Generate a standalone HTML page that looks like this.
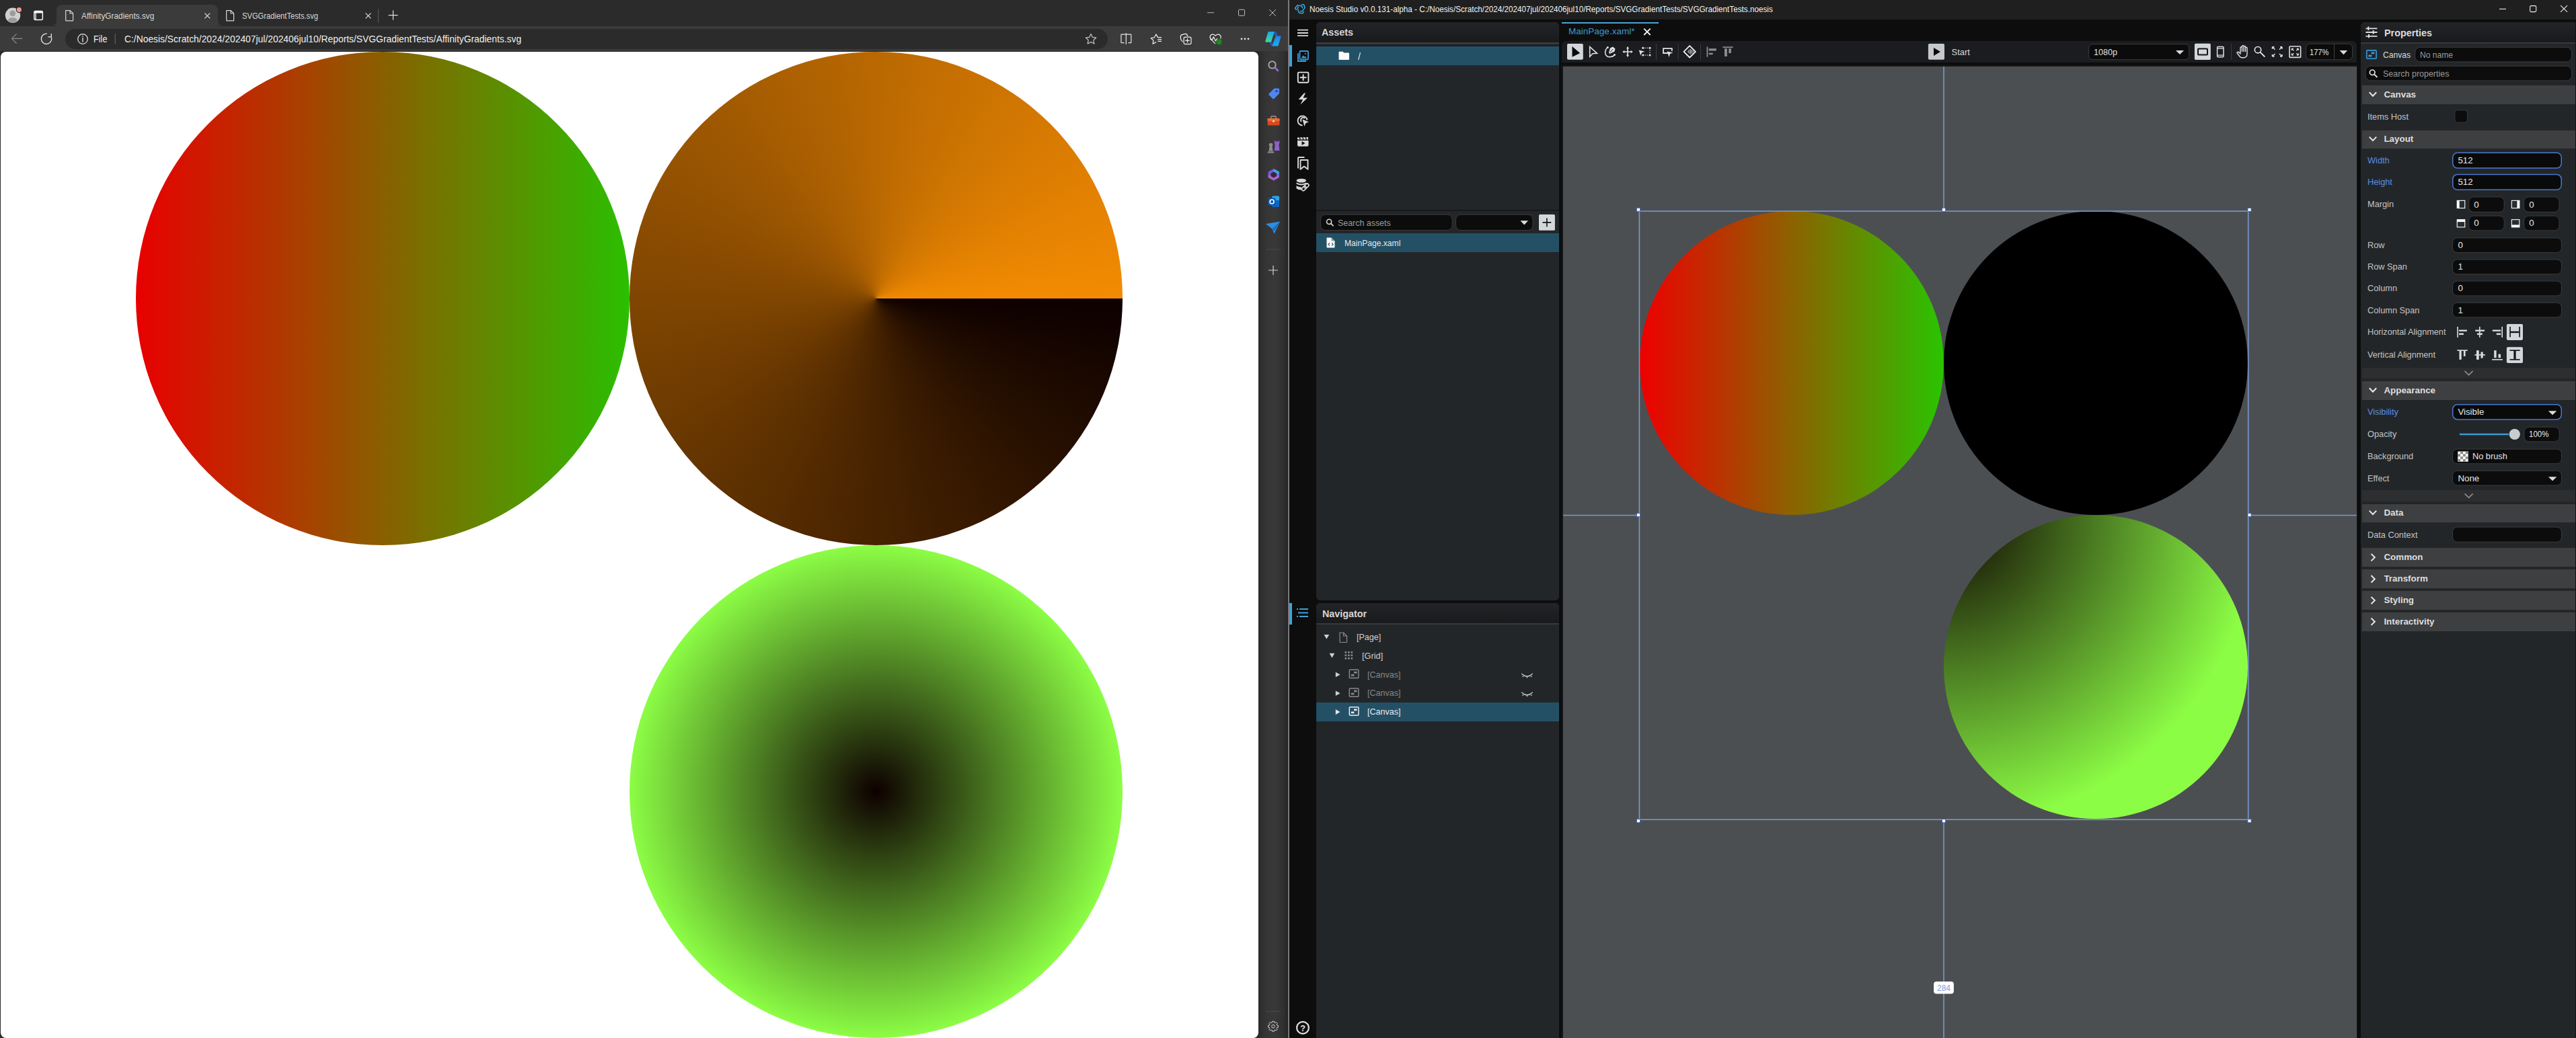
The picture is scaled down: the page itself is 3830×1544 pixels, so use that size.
<!DOCTYPE html>
<html><head><meta charset="utf-8">
<style>
*{box-sizing:border-box}
html,body{margin:0;padding:0}
body{width:3830px;height:1544px;position:relative;overflow:hidden;background:#0d0d0d;font-family:"Liberation Sans",sans-serif}
.a{position:absolute}
.t{position:absolute;white-space:nowrap;line-height:1}
svg{position:absolute;overflow:visible}
</style></head><body>
<!-- ============ EDGE BROWSER ============ -->
<div class="a" style="left:0;top:0;width:1915px;height:1544px;background:#2b2b2b"></div>
<div class="a" style="left:0;top:38.5px;width:1915px;height:37.5px;background:#3b3b3b"></div>
<div class="a" style="left:0;top:76px;width:1871px;height:1px;background:#272727"></div>
<!-- active tab -->
<div class="a" style="left:84px;top:7px;width:240px;height:32px;background:#3b3b3b;border-radius:8px 8px 0 0"></div>
<svg style="left:76px;top:30px" width="8" height="8"><path d="M0 8 Q8 8 8 0 V8Z" fill="#3b3b3b"/></svg>
<svg style="left:324px;top:30px" width="8" height="8"><path d="M8 8 Q0 8 0 0 V8Z" fill="#3b3b3b"/></svg>
<!-- avatar -->
<svg style="left:0;top:0" width="40" height="40">
  <circle cx="19" cy="22.8" r="11.2" fill="#d0d0d0"/>
  <circle cx="18.8" cy="19.8" r="4.4" fill="#9c9c9c"/>
  <path d="M11.5 30.5 Q13 26.2 18.8 26.2 Q24.6 26.2 26.2 30.5 Q23 33.6 18.9 33.6 Q14.8 33.6 11.5 30.5Z" fill="#9c9c9c"/>
  <circle cx="28.4" cy="14.6" r="4.6" fill="#2b2b2b"/>
  <circle cx="28.4" cy="14.6" r="3.5" fill="#f09a9a"/>
</svg>
<!-- vertical tabs icon -->
<svg style="left:0;top:0" width="80" height="40">
  <rect x="50.8" y="16.5" width="12.6" height="13" rx="2" fill="none" stroke="#fff" stroke-width="1.4"/>
  <rect x="50.8" y="16" width="12.6" height="3.6" rx="1.5" fill="#fff"/>
  <rect x="52.4" y="19" width="1.3" height="10.5" fill="#fff"/>
</svg>
<!-- file icons -->
<svg style="left:0;top:0" width="360" height="40">
  <path d="M97.7 15.6 H104.3 L108.6 19.9 V30.2 Q108.6 30.8 108 30.8 H98.3 Q97.7 30.8 97.7 30.2Z M104.1 15.6 V20 H108.6" fill="none" stroke="#d8d8d8" stroke-width="1.2" stroke-linejoin="round"/>
  <path d="M336.7 15.6 H343.3 L347.6 19.9 V30.2 Q347.6 30.8 347 30.8 H337.3 Q336.7 30.8 336.7 30.2Z M343.1 15.6 V20 H347.6" fill="none" stroke="#d8d8d8" stroke-width="1.2" stroke-linejoin="round"/>
  <path d="M304.4 19.6 L312.2 27.4 M312.2 19.6 L304.4 27.4" stroke="#e0e0e0" stroke-width="1.2"/>
  <path d="M543.6 19.6 L551.4 27.4 M551.4 19.6 L543.6 27.4" stroke="#e0e0e0" stroke-width="1.2"/>
</svg>
<svg style="left:0;top:0" width="600" height="40">
  <path d="M562.5 13.2 V33.7" stroke="#5a5a5a" stroke-width="1"/>
  <path d="M577.6 22.6 H591.5 M584.5 15.6 V29.7" stroke="#e0e0e0" stroke-width="1.2"/>
</svg>
<div class="t" style="left:121px;top:16.5px;font-size:13.5px;color:#d8d8d8;transform:scaleX(0.877);transform-origin:0 0">AffinityGradients.svg</div>
<div class="t" style="left:360px;top:16.5px;font-size:13.5px;color:#d8d8d8;transform:scaleX(0.8275);transform-origin:0 0">SVGGradientTests.svg</div>
<!-- window buttons -->
<svg style="left:1780px;top:0" width="135" height="38">
  <path d="M15 18.8 H25" stroke="#bdbdbd" stroke-width="1"/>
  <rect x="61.5" y="14.3" width="9" height="9" rx="1" fill="none" stroke="#bdbdbd" stroke-width="1"/>
  <path d="M107 14 L117 24 M117 14 L107 24" stroke="#bdbdbd" stroke-width="1"/>
</svg>
<!-- back / refresh -->
<svg style="left:0;top:38px" width="100" height="38">
  <path d="M17.5 19.4 H33 M17.5 19.4 L24.6 12.3 M17.5 19.4 L24.6 26.5" fill="none" stroke="#8c8c8c" stroke-width="1.2"/>
  <path d="M69.8 12.1 A7.7 7.7 0 1 0 76 16.5" fill="none" stroke="#e6e6e6" stroke-width="1.3"/>
  <path d="M71.3 16.9 H76.3 V12" fill="none" stroke="#e6e6e6" stroke-width="1.3"/>
</svg>
<!-- url pill -->
<div class="a" style="left:97px;top:43px;width:1550px;height:30px;background:#2b2b2b;border-radius:15px"></div>
<svg style="left:0;top:38px" width="200" height="38">
  <circle cx="123" cy="20" r="7.3" fill="none" stroke="#e6e6e6" stroke-width="1.2"/>
  <path d="M123 18 V24.5" stroke="#e6e6e6" stroke-width="1.4"/>
  <circle cx="123" cy="15.8" r="0.9" fill="#e6e6e6"/>
  <path d="M171.2 12.2 V27.8" stroke="#6a6a6a" stroke-width="1"/>
</svg>
<div class="t" style="left:139.4px;top:51px;font-size:14.5px;color:#f0f0f0;transform:scaleX(0.877);transform-origin:0 0">File</div>
<div class="t" style="left:184.5px;top:51px;font-size:14.5px;color:#f0f0f0;transform:scaleX(0.955);transform-origin:0 0">C:/Noesis/Scratch/2024/202407jul/202406jul10/Reports/SVGGradientTests/AffinityGradients.svg</div>
<!-- toolbar icons right -->
<svg style="left:1600px;top:38px" width="315" height="38">
  <path d="M22 12.4 L24.4 17.4 L29.8 18 L25.8 21.7 L26.9 27.1 L22 24.4 L17.1 27.1 L18.2 21.7 L14.2 18 L19.6 17.4Z" fill="none" stroke="#cfcfcf" stroke-width="1.1" stroke-linejoin="round"/>
  <path d="M81.5 13.2 H67.5 Q66.9 13.2 66.9 13.8 V25 Q66.9 25.6 67.5 25.6 H71.5 M77.5 13.2 H81.2 Q81.8 13.2 81.8 13.8 V25 Q81.8 25.6 81.2 25.6 H77.5 M74.3 11.2 V28" fill="none" stroke="#e6e6e6" stroke-width="1.2"/>
  <path d="M121.5 17.6 L118.9 13 L116.3 17.8 L111.2 18.5 L114.9 22.2 L114 27.3 L118.6 24.9" fill="none" stroke="#f0f0f0" stroke-width="1.2" stroke-linejoin="round" stroke-linecap="round"/>
  <path d="M121.3 17.6 H127 M121.3 20.6 H127 M121.3 23.4 H127" stroke="#f0f0f0" stroke-width="1.2"/>
  <path d="M158.6 23.7 Q155.8 22.5 155.4 19 L155.3 16.5 Q155.4 14 158 13.3 L161.8 12.4 Q164.8 12 165.7 15.4" fill="none" stroke="#f0f0f0" stroke-width="1.2" stroke-linecap="round"/>
  <rect x="160.1" y="17.1" width="10.9" height="10.6" rx="2.2" fill="#3b3b3b" stroke="#f0f0f0" stroke-width="1.2"/>
  <path d="M165.5 19.2 V25.6 M162.3 22.4 H168.7" stroke="#f0f0f0" stroke-width="1.2"/>
  <path d="M206.6 26.7 L201 21 Q198.4 18.4 199.3 15.8 Q200.4 13 203.4 13.2 Q205.6 13.5 207.1 15.1 Q208.6 13.5 210.8 13.2 Q213.8 13 214.9 15.8 Q215.6 17.6 214.8 19" fill="none" stroke="#f0f0f0" stroke-width="1.2" stroke-linecap="round"/>
  <path d="M199.2 20.6 H202.5 L204.5 16.9 L207.3 22.9 L209.8 19.2" fill="none" stroke="#f0f0f0" stroke-width="1.2" stroke-linejoin="round"/>
  <circle cx="212.4" cy="24.4" r="4.1" fill="#1a8a1e"/>
  <circle cx="246" cy="19.8" r="1.4" fill="#e6e6e6"/><circle cx="251" cy="19.8" r="1.4" fill="#e6e6e6"/><circle cx="256" cy="19.8" r="1.4" fill="#e6e6e6"/>
</svg>
<!-- copilot logo -->
<svg style="left:1879px;top:44px" width="28" height="28" viewBox="0 0 28 28">
  <defs>
    <linearGradient id="cp1" x1="0" y1="0" x2="0" y2="1"><stop offset="0" stop-color="#20a8e8"/><stop offset="1" stop-color="#45d890"/></linearGradient>
    <linearGradient id="cp2" x1="0" y1="0" x2="0" y2="1"><stop offset="0" stop-color="#2a7ee8"/><stop offset="1" stop-color="#18b0f0"/></linearGradient>
  </defs>
  <path d="M14 3.3 L17.5 3.3 Q19 3.6 19.6 5.4 L21 9.6 L16.5 9.6Z" fill="#1a5cb8"/>
  <path d="M8.5 17.8 L11 17.8 L14.8 24.4 L12 24.4 Q10.6 24.2 10 22.8Z" fill="#2450d8"/>
  <path d="M7.6 3.1 H15.8 L11.2 17.8 Q10.9 18.7 9.8 18.7 H3.4 Q2 18.6 2.3 17.2 L6 4.6 Q6.4 3.1 7.6 3.1Z" fill="url(#cp1)"/>
  <path d="M18.9 9.4 H24.3 Q25.7 9.5 25.4 11 L21.8 23.3 Q21.5 24.5 20.3 24.5 H12.4 L17.4 10.5 Q17.8 9.4 18.9 9.4Z" fill="url(#cp2)"/>
</svg>
<!-- sidebar -->
<div class="a" style="left:1871px;top:76px;width:44px;height:1468px;background:linear-gradient(90deg,#1c1c1c 0,#2c2c2c 1.5px,#353535 12px,#383838 24px,#303030 38px,#242424 44px)"></div>
<svg style="left:1871px;top:76px" width="44" height="1468">
  <circle cx="20.5" cy="20.5" r="5.2" fill="none" stroke="#a0a0a0" stroke-width="2"/>
  <path d="M24.2 24.2 L29 29" stroke="#a070d0" stroke-width="2.6" stroke-linecap="round"/>
  <path d="M15.5 63.5 L23 56 Q23.6 55.6 24.3 55.6 H30 Q31 55.6 31 56.6 V62.3 Q31 63 30.5 63.5 L23 71 Q22.2 71.8 21.4 71 L15.5 65.1 Q14.7 64.3 15.5 63.5Z" fill="#4f86ee"/>
  <circle cx="27" cy="59.6" r="1.7" fill="#1f3f90"/>
  <rect x="13.6" y="100" width="17.8" height="10.5" rx="1.2" fill="#d9481c"/>
  <rect x="13.6" y="100" width="17.8" height="4.2" rx="1" fill="#f06a36"/>
  <path d="M18.8 100 V98 Q18.8 97 19.8 97 H25.2 Q26.2 97 26.2 98 V100" fill="none" stroke="#9a9a9a" stroke-width="1.4"/>
  <circle cx="22.5" cy="104.2" r="1.5" fill="#f4e0d8"/>
  <circle cx="18.5" cy="139.5" r="2.8" fill="#8c8c8c"/>
  <path d="M16.5 142 H20.5 L21.5 148.5 H15.5Z" fill="#8c8c8c"/>
  <path d="M13.6 152 Q13.6 148.5 16 148.5 H21 Q23.3 148.5 23.3 152Z" fill="#7a7a7a"/>
  <path d="M23.8 148 L24.8 139 L23.8 136.5 V133.6 H25.6 V135 H27 V133.6 H28.3 V135 H29.6 V133.6 H31.4 V136.5 L30.4 139 L31.4 148Z" fill="#8e62cc"/>
  <path d="M22.7 175 L30.8 179.4 V188 L22.7 192.4 L14.6 188 V179.4Z" fill="#7a5ad8"/>
  <path d="M22.7 175 L30.8 179.4 V184 L22.7 179.6Z" fill="#3fa2e8"/>
  <path d="M14.6 184 L22.7 188 L30.8 184 V188 L22.7 192.4 L14.6 188Z" fill="#b060d0"/>
  <path d="M22.7 179.6 L27 182 V186 L22.7 188.4 L18.4 186 V182Z" fill="#2e2e2e"/>
  <rect x="20.5" y="215.5" width="10.5" height="16" rx="1.4" fill="#28a8ea"/>
  <rect x="20.5" y="222" width="10.5" height="10" rx="1" fill="#1064c0"/>
  <rect x="14.6" y="218.5" width="11" height="11" rx="1.4" fill="#0a5cb8"/>
  <circle cx="20.1" cy="224" r="3" fill="none" stroke="#fff" stroke-width="1.6"/>
  <path d="M11 257 L32 253.5 L23.5 272 L20.5 264.5Z" fill="#2a8ee0"/>
  <path d="M20.5 264.5 L32 253.5 L23.5 268Z" fill="#1a6ac0"/>
  <path d="M11 295 H33" stroke="#4a4a4a" stroke-width="1"/>
  <path d="M22 319 V333 M15 326 H29" stroke="#d0d0d0" stroke-width="1.2"/>
  <path d="M11 1428.4 H33" stroke="#4a4a4a" stroke-width="1"/>
  <path d="M27.70 1449.17 L29.46 1449.25 L29.46 1452.15 L27.70 1452.23 L27.11 1453.65 L28.30 1454.95 L26.25 1457.00 L24.95 1455.81 L23.53 1456.40 L23.45 1458.16 L20.55 1458.16 L20.47 1456.40 L19.05 1455.81 L17.75 1457.00 L15.70 1454.95 L16.89 1453.65 L16.30 1452.23 L14.54 1452.15 L14.54 1449.25 L16.30 1449.17 L16.89 1447.75 L15.70 1446.45 L17.75 1444.40 L19.05 1445.59 L20.47 1445.00 L20.55 1443.24 L23.45 1443.24 L23.53 1445.00 L24.95 1445.59 L26.25 1444.40 L28.30 1446.45 L27.11 1447.75Z" fill="none" stroke="#d0d0d0" stroke-width="1" stroke-linejoin="round"/>
  <circle cx="22" cy="1450.7" r="2.3" fill="none" stroke="#d0d0d0" stroke-width="1"/>
</svg>
<!-- content -->
<div class="a" style="left:1px;top:77px;width:1870px;height:1467px;background:#fff;border-radius:8px;overflow:hidden">
  <div class="a" style="left:201px;top:0;width:733.5px;height:733.5px;border-radius:50%;background:linear-gradient(90deg,#e80000,#2bbf00)"></div>
  <div class="a" style="left:934.5px;top:0;width:733.5px;height:733.5px;border-radius:50%;background:conic-gradient(from 90deg,#0d0000,#f38b02)"></div>
  <div class="a" style="left:934.5px;top:733.5px;width:733.5px;height:733.5px;border-radius:50%;background:radial-gradient(circle closest-side,#0d0000,#8cfd45)"></div>
</div>
<!-- window border -->
<div class="a" style="left:1915px;top:0;width:2px;height:1544px;background:#7a7a7a"></div>

<!-- ============ NOESIS ============ -->
<div class="a" style="left:1917px;top:0;width:1913px;height:29px;background:#1f1f1f"></div>
<div class="a" style="left:1917px;top:29px;width:1913px;height:1515px;background:#0d0d0d"></div>
<!-- logo -->
<svg style="left:1917px;top:0" width="30" height="29" viewBox="0 0 30 29">
  <g fill="none" stroke="#3ba8e0" stroke-width="1.5" stroke-linejoin="round" stroke-linecap="round">
  <path d="M10.3 14.5 L8.5 12.3 L11.8 7.9 L18 8.7 L19.5 11.7"/>
  <path d="M18.5 6.4 L21.5 6.9 L23.3 11.4 L19.2 16.5 L16.5 16.8"/>
  <path d="M13.3 10.3 L12.1 12.4 L14.5 19.2 L19.8 19.8 L21.3 17.3"/>
  </g>
</svg>
<div class="t" style="left:1947px;top:7px;font-size:13px;color:#f2f2f2;transform:scaleX(0.9);transform-origin:0 0">Noesis Studio v0.0.131-alpha - C:/Noesis/Scratch/2024/202407jul/202406jul10/Reports/SVGGradientTests/SVGGradientTests.noesis</div>
<svg style="left:3700px;top:0" width="130" height="29">
  <path d="M16 13.4 H26" stroke="#f0f0f0" stroke-width="1.1"/>
  <rect x="61.7" y="8.6" width="9" height="9" rx="1.6" fill="none" stroke="#f0f0f0" stroke-width="1.1"/>
  <path d="M107.1 8.1 L117.1 17.9 M117.1 8.1 L107.1 17.9" stroke="#f0f0f0" stroke-width="1.1"/>
</svg>
<!-- left toolbar -->
<div class="a" style="left:1917px;top:67px;width:4px;height:32px;background:#3fa0dc"></div>
<div class="a" style="left:1917px;top:897px;width:4px;height:32px;background:#3fa0dc"></div>
<svg style="left:1917px;top:29px" width="40" height="1515">
  <path d="M12 15.6 H28 M12 20 H28 M12 24.1 H28" stroke="#d8d8d8" stroke-width="1.9"/>
  <rect x="15.5" y="47" width="12.5" height="12.5" rx="1.2" fill="none" stroke="#3a9ad8" stroke-width="1.8"/>
  <path d="M12.9 50.3 V62 H25" fill="none" stroke="#3a9ad8" stroke-width="1.8"/>
  <path d="M17.5 57.5 L20.5 53.5 L22.5 55.5 L23.5 54.5 L26 57.5Z" fill="#3a9ad8"/>
  <circle cx="23.8" cy="50.8" r="1.1" fill="#3a9ad8"/>
  <rect x="12.8" y="78.6" width="15.6" height="15.2" rx="1.5" fill="none" stroke="#e0e0e0" stroke-width="1.9"/>
  <path d="M20.6 81.5 V91 M15.8 86.2 H25.4" stroke="#e0e0e0" stroke-width="1.9"/>
  <path d="M22 109.5 L13.5 119 H20 L16.5 126.5 L27 116.5 H20.5 L24 109.5Z" fill="#d8d8d8"/>
  <path d="M26.5 149.5 A7 7 0 1 0 19.5 157.5 M23 147 A3.3 3.3 0 1 0 18 152" fill="none" stroke="#d8d8d8" stroke-width="1.9"/>
  <path d="M19.5 148.5 L29 152.5 L24.5 154 L22.5 159Z" fill="#d8d8d8"/>
  <path d="M12 180 H28.5 V187 Q28.5 188.8 26.7 188.8 H13.8 Q12 188.8 12 187Z" fill="#d8d8d8"/>
  <path d="M12 175.5 L28 175 V178.5 H12Z" fill="#d8d8d8"/>
  <path d="M15 175.3 L16.5 178.5 M19.5 175.2 L21 178.5 M24 175.1 L25.5 178.5" stroke="#0d0d0d" stroke-width="1.3"/>
  <path d="M18.5 181 L23.5 184 L18.5 187Z" fill="#0d0d0d"/>
  <path d="M13 221.5 V206 Q13 205 14 205 H22.5" fill="none" stroke="#d8d8d8" stroke-width="1.9"/>
  <path d="M16.5 209 H27.5 V222.8 L22 218.5 L16.5 222.8Z" fill="none" stroke="#d8d8d8" stroke-width="1.9" stroke-linejoin="round"/>
  <ellipse cx="17.8" cy="239.6" rx="7.3" ry="2.9" fill="#d8d8d8"/>
  <path d="M10.5 242.6 Q17.8 246.6 25.1 242.6 V244.6 Q17.8 248.6 10.5 244.6Z" fill="#d8d8d8"/>
  <path d="M10.5 247.3 Q13.5 249.2 18 249.6 L17.6 253.6 Q12.8 253.4 10.5 251.3Z" fill="#d8d8d8"/>
  <g transform="rotate(-45 23.6 249.4)" fill="none" stroke="#d8d8d8" stroke-width="1.7"><rect x="17.2" y="247" width="7.6" height="4.8" rx="2.4"/><rect x="22.4" y="247" width="7.6" height="4.8" rx="2.4"/></g>
  <path d="M11 877 H13 M15 877 H28 M13 882.5 H28 M11 888 H13 M15 888 H28" stroke="#3fa0dc" stroke-width="1.8"/>
  <circle cx="12" cy="882.5" r="0.01" fill="none"/>
  <circle cx="20" cy="1499.8" r="8.9" fill="none" stroke="#e0e0e0" stroke-width="2.2"/>
  <text x="20" y="1504.8" font-family="Liberation Sans" font-weight="700" font-size="12.5" fill="#e6e6e6" text-anchor="middle">?</text>
</svg>

<!-- assets panel -->
<div class="a" style="left:1957px;top:33px;width:361px;height:860px;background:#232629;border-radius:6px;overflow:hidden">
  <div class="a" style="left:0;top:0;width:361px;height:30px;background:linear-gradient(180deg,#232427,#191a1c)"></div>
  <div class="a" style="left:0;top:30px;width:361px;height:2.5px;background:#37393c"></div>
  <div class="a" style="left:0;top:32.5px;width:361px;height:3.5px;background:#1c1e21"></div>
  <div class="a" style="left:0;top:36px;width:361px;height:28px;background:#245066"></div>
  <div class="a" style="left:0;top:279px;width:361px;height:2px;background:#18191b"></div>
  <div class="a" style="left:0;top:314px;width:361px;height:28px;background:#245066"></div>
</div>
<div class="t" style="left:1965.4px;top:40.3px;font-size:15px;font-weight:700;color:#d6d6d6;transform:scaleX(0.955);transform-origin:0 0">Assets</div>
<svg style="left:1957px;top:33px" width="361" height="360">
  <path d="M33.5 44.8 Q33.5 43.8 34.5 43.8 H39.5 L41 45.5 H48 Q49 45.5 49 46.5 V55 Q49 56 48 56 H34.5 Q33.5 56 33.5 55Z" fill="#fafafa"/>
  <path d="M65.5 45.2 L62.6 56" stroke="#f0f0f0" stroke-width="1.1"/>
  <!-- search field -->
  <rect x="6.6" y="286.2" width="195.6" height="23.3" rx="7" fill="#0c0c0c" stroke="#3a3b3d" stroke-width="1"/>
  <circle cx="19.1" cy="296.8" r="3.6" fill="none" stroke="#d8d8d8" stroke-width="1.6"/>
  <path d="M21.7 299.4 L25 302.7" stroke="#d8d8d8" stroke-width="1.8" stroke-linecap="round"/>
  <rect x="207.6" y="286.2" width="114.4" height="23.3" rx="7" fill="#0c0c0c" stroke="#3a3b3d" stroke-width="1"/>
  <path d="M303.5 295.3 H315 L309.25 301.5Z" fill="#dcdcdc"/>
  <rect x="331" y="286" width="23.9" height="23.8" rx="1.5" fill="#d3d6da"/>
  <path d="M342.9 291.5 V304.3 M336.5 297.9 H349.3" stroke="#111" stroke-width="1.6"/>
  <!-- xaml file icon -->
  <path d="M15.5 320.4 H22.5 L27.5 325.4 V334.6 Q27.5 335.6 26.5 335.6 H16.5 Q15.5 335.6 15.5 334.6Z" fill="#f8f8f8"/>
  <path d="M22.5 320.4 V325.4 H27.5" fill="#245066" opacity="0.5"/>
  <path d="M19.8 328.5 L18 330.4 L19.8 332.3 M23.2 328.5 L25 330.4 L23.2 332.3" fill="none" stroke="#245066" stroke-width="1.1"/>
</svg>
<div class="t" style="left:1989px;top:326.3px;font-size:12.8px;color:#9c9c9c;transform:scaleX(0.97);transform-origin:0 0">Search assets</div>
<div class="t" style="left:1999.4px;top:355.8px;font-size:12.8px;color:#e6e6e6;transform:scaleX(0.945);transform-origin:0 0">MainPage.xaml</div>

<!-- navigator panel -->
<div class="a" style="left:1957px;top:897px;width:361px;height:647px;background:#232629;border-radius:6px 6px 0 0;overflow:hidden">
  <div class="a" style="left:0;top:0;width:361px;height:30px;background:linear-gradient(180deg,#232427,#191a1c)"></div>
  <div class="a" style="left:0;top:30px;width:361px;height:2px;background:#37393c"></div>
  <div class="a" style="left:0;top:148px;width:361px;height:28px;background:#245066"></div>
</div>
<div class="t" style="left:1965.6px;top:904.5px;font-size:15px;font-weight:700;color:#d6d6d6;transform:scaleX(0.957);transform-origin:0 0">Navigator</div>
<svg style="left:1957px;top:929px" width="361" height="150">
  <path d="M11.5 15 H19.2 L15.35 21.6Z" fill="#d0d0d0"/>
  <path d="M19.6 42.8 H27.3 L23.45 49.4Z" fill="#d0d0d0"/>
  <path d="M28.8 70.7 L35.5 74.5 L28.8 78.3Z" fill="#d0d0d0"/>
  <path d="M28.8 98.5 L35.5 102.3 L28.8 106.1Z" fill="#d0d0d0"/>
  <path d="M28.8 126.3 L35.5 130.1 L28.8 133.9Z" fill="#e6e6e6"/>
  <path d="M35 12 H40.5 L45.5 17 V25.5 Q45.5 26.5 44.5 26.5 H36 Q35 26.5 35 25.5Z" fill="none" stroke="#8a8a8a" stroke-width="1.2"/>
  <path d="M40.5 12 V17 H45.5" fill="none" stroke="#8a8a8a" stroke-width="1.2"/>
  <g fill="#8a8a8a"><rect x="42.5" y="40" width="2.6" height="2.6"/><rect x="47" y="40" width="2.6" height="2.6"/><rect x="51.5" y="40" width="2.6" height="2.6"/><rect x="42.5" y="44.5" width="2.6" height="2.6"/><rect x="47" y="44.5" width="2.6" height="2.6"/><rect x="51.5" y="44.5" width="2.6" height="2.6"/><rect x="42.5" y="49" width="2.6" height="2.6"/><rect x="47" y="49" width="2.6" height="2.6"/><rect x="51.5" y="49" width="2.6" height="2.6"/></g>
  <g fill="none" stroke="#8a8a8a" stroke-width="1.4"><rect x="49.3" y="67.3" width="13.6" height="12.2" rx="1"/><rect x="49.3" y="95" width="13.6" height="12.2" rx="1"/></g>
  <g fill="#8a8a8a"><rect x="56" y="70" width="4.6" height="2.6"/><rect x="51.8" y="74" width="4.6" height="2.6"/><rect x="56" y="97.7" width="4.6" height="2.6"/><rect x="51.8" y="101.7" width="4.6" height="2.6"/></g>
  <rect x="49.3" y="122.8" width="13.6" height="12.2" rx="1" fill="none" stroke="#eaeaea" stroke-width="1.5"/>
  <g fill="#eaeaea"><rect x="56" y="125.5" width="4.6" height="2.6"/><rect x="51.8" y="129.5" width="4.6" height="2.6"/></g>
  <path d="M305.3 73.0 Q313.5 81.0 321.7 73.0 M307.8 76.5 L306.8 78.1 M313.5 77.5 V79.5 M319.2 76.5 L320.2 78.1" fill="none" stroke="#cfcfcf" stroke-width="1.3"/>
  <path d="M305.3 100.8 Q313.5 108.8 321.7 100.8 M307.8 104.3 L306.8 105.9 M313.5 105.3 V107.3 M319.2 104.3 L320.2 105.9" fill="none" stroke="#cfcfcf" stroke-width="1.3"/>
</svg>
<div class="t" style="left:2017.2px;top:940.9px;font-size:13.2px;color:#cfcfcf;transform:scaleX(0.95);transform-origin:0 0">[Page]</div>
<div class="t" style="left:2025.3px;top:968.6px;font-size:13.2px;color:#cfcfcf;transform:scaleX(0.97);transform-origin:0 0">[Grid]</div>
<div class="t" style="left:2033.4px;top:996.6px;font-size:13.2px;color:#868686;transform:scaleX(0.95);transform-origin:0 0">[Canvas]</div>
<div class="t" style="left:2033.4px;top:1024.4px;font-size:13.2px;color:#868686;transform:scaleX(0.95);transform-origin:0 0">[Canvas]</div>
<div class="t" style="left:2033.4px;top:1052.3px;font-size:13.2px;color:#ececec;transform:scaleX(0.95);transform-origin:0 0">[Canvas]</div>

<!-- doc tab -->
<div class="a" style="left:2322px;top:32.6px;width:144px;height:2.4px;background:#4ba3d6"></div>
<div class="t" style="left:2332.3px;top:40.3px;font-size:13px;color:#3d9ad3;transform:scaleX(1.04);transform-origin:0 0">MainPage.xaml*</div>
<svg style="left:2440px;top:38px" width="20" height="20"><path d="M4.3 4.6 L13.7 14 M13.7 4.6 L4.3 14" stroke="#f0f0f0" stroke-width="1.9"/></svg>

<!-- toolbar -->
<div class="a" style="left:2322px;top:61px;width:1182px;height:31.7px;background:#1b1c1f;border-radius:6px 6px 0 0"></div>
<svg style="left:2322px;top:61px" width="1182" height="32">
  <rect x="8" y="3.9" width="23.8" height="23.9" rx="1.8" fill="#d3d6da"/>
  <path d="M15.5 8 L27.2 18 L15.5 23.7Z" fill="#0a0a0a"/>
  <path d="M41.7 8.6 L52.5 18.3 L46 18.8 L41.7 23.2Z" fill="none" stroke="#e0e0e0" stroke-width="1.6" stroke-linejoin="miter"/>
  <path d="M68 9.5 Q63.5 14 65 19.5 Q67 24.5 73 23.5 Q77 23 78.5 20.5" fill="none" stroke="#e0e0e0" stroke-width="1.6"/>
  <circle cx="68.3" cy="9.5" r="1.5" fill="#e0e0e0"/><circle cx="78.5" cy="20.5" r="1.5" fill="#e0e0e0"/>
  <path d="M70 17.5 L72 10.5 L76 8.5 L79.5 11.5 L78.5 15.5 L71.5 19Z" fill="#e0e0e0"/>
  <path d="M72 17 L76 12" stroke="#1b1c1f" stroke-width="0.9"/>
  <path d="M98 8.8 V23.2 M90.8 16 H105.2" stroke="#e0e0e0" stroke-width="1.7"/>
  <path d="M95.8 11.2 L98 8.6 L100.2 11.2Z M95.8 20.8 L98 23.4 L100.2 20.8Z M93.3 13.8 L90.6 16 L93.3 18.2Z M102.7 13.8 L105.4 16 L102.7 18.2Z" fill="#e0e0e0"/>
  <g fill="#e0e0e0"><circle cx="120.8" cy="10.3" r="1.6"/><circle cx="131" cy="10.3" r="1.6"/><circle cx="120.8" cy="21" r="1.6"/><circle cx="131" cy="21" r="1.6"/>
  <rect x="123.5" y="9.7" width="1.3" height="1.3"/><rect x="126.6" y="9.7" width="1.3" height="1.3"/><rect x="123.5" y="20.4" width="1.3" height="1.3"/><rect x="126.6" y="20.4" width="1.3" height="1.3"/><rect x="130.4" y="13.3" width="1.3" height="1.3"/><rect x="130.4" y="16.6" width="1.3" height="1.3"/></g>
  <path d="M114.8 13.5 L123.5 15.8 L119 17.3 L117.3 21.8Z" fill="#e0e0e0"/>
  <g stroke="#3c3d40" stroke-width="1"><path d="M140.5 4.4 V27.8"/><path d="M173.3 4.4 V27.8"/><path d="M206.5 4.4 V27.8"/><path d="M995.6 4 V28"/></g>
  <path d="M161.5 18 H151 V11.2 H163.8 V15" fill="none" stroke="#e0e0e0" stroke-width="1.8"/>
  <path d="M156.7 15.3 L165.5 17.5 L161 19 L159.5 24Z" fill="#e0e0e0"/>
  <path d="M190.2 7.2 L198.9 15.8 L190.2 24.5 L181.5 15.8Z" fill="#1b1c1f" stroke="#f0f0f0" stroke-width="1.8" stroke-linejoin="round"/>
  <path d="M186.5 15.8 L190.2 12 L190.2 19.6Z" fill="#888"/>
  <g fill="#c0c0c0"><rect x="190.8" y="11.8" width="1.2" height="8"/><rect x="192.8" y="12.8" width="1.2" height="6"/><rect x="194.8" y="14" width="1" height="3.6"/></g>
  <g fill="#8c8c8c"><rect x="215.5" y="8.5" width="1.8" height="15.2"/><rect x="218.7" y="11.2" width="11.1" height="3.3"/><rect x="218.7" y="17.7" width="6" height="2.5"/>
  <rect x="239.4" y="8.3" width="15.2" height="1.8"/><rect x="242" y="11.2" width="3.9" height="11.7"/><rect x="248.3" y="11.2" width="3.6" height="6.8"/></g>
  <!-- start -->
  <rect x="544.9" y="4" width="24.1" height="23.8" rx="1.8" fill="#c5c8cc"/>
  <path d="M553 10 L563 15.9 L553 22Z" fill="#0a0a0a"/>
  <!-- 1080p -->
  <rect x="783.7" y="4.6" width="148.9" height="23.1" rx="5.5" fill="#0b0b0b" stroke="#3c3d40" stroke-width="1"/>
  <path d="M912.9 14 H925.1 L919 20.1Z" fill="#d8d8d8"/>
  <rect x="940.9" y="3.8" width="23.9" height="24.2" rx="1.8" fill="#d3d6da"/>
  <rect x="946" y="11.5" width="14" height="9" rx="1" fill="none" stroke="#111" stroke-width="2"/>
  <rect x="974.6" y="8.6" width="9.4" height="15.2" rx="1.2" fill="none" stroke="#e0e0e0" stroke-width="1.5"/>
  <path d="M974.6 11.2 H984 M974.6 21.2 H984" stroke="#e0e0e0" stroke-width="1.2"/>
  <!-- hand -->
  <path d="M1008.5 23.5 L1004.5 18.5 Q1003.3 16.8 1005 16.3 Q1006.2 16 1007.5 17.5 L1009 19 V10 Q1009 8.7 1010.3 8.7 Q1011.5 8.7 1011.5 10 V15.5 V8 Q1011.5 6.7 1012.8 6.7 Q1014 6.7 1014 8 V15.5 V8.8 Q1014 7.5 1015.3 7.5 Q1016.5 7.5 1016.5 8.8 V15.5 V10.5 Q1016.5 9.3 1017.7 9.3 Q1019 9.3 1019 10.5 V19 Q1019 24.7 1014 24.7 H1011 Q1009.5 24.7 1008.5 23.5Z" fill="none" stroke="#e0e0e0" stroke-width="1.4" stroke-linejoin="round"/>
  <circle cx="1035" cy="13.2" r="4.7" fill="none" stroke="#e0e0e0" stroke-width="1.7"/>
  <path d="M1038.5 16.7 L1044.8 23" stroke="#e0e0e0" stroke-width="1.9" stroke-linecap="round"/>
  <g fill="none" stroke="#e0e0e0" stroke-width="1.5"><path d="M1056.5 8.8 L1060.5 12.8 M1056.5 8.8 H1059.5 M1056.5 8.8 V11.8"/><path d="M1071 8.8 L1067 12.8 M1071 8.8 H1068 M1071 8.8 V11.8"/><path d="M1056.5 23 L1060.5 19 M1056.5 23 H1059.5 M1056.5 23 V20"/><path d="M1071 23 L1067 19 M1071 23 H1068 M1071 23 V20"/></g>
  <rect x="1082" y="8" width="16.6" height="16.4" rx="1" fill="none" stroke="#e0e0e0" stroke-width="1.6"/>
  <g fill="none" stroke="#e0e0e0" stroke-width="1.3"><path d="M1085.3 11.3 L1088.3 14.3 M1085.3 11.3 H1087.8 M1085.3 11.3 V13.8"/><path d="M1095.3 11.3 L1092.3 14.3 M1095.3 11.3 H1092.8 M1095.3 11.3 V13.8"/><path d="M1085.3 21.1 L1088.3 18.1 M1085.3 21.1 H1087.8 M1085.3 21.1 V18.6"/><path d="M1095.3 21.1 L1092.3 18.1 M1095.3 21.1 H1092.8 M1095.3 21.1 V18.6"/></g>
  <rect x="1106.6" y="4.2" width="69" height="23.6" rx="6" fill="#0b0b0b" stroke="#3c3d40" stroke-width="1"/>
  <path d="M1148.5 4.5 V27.5" stroke="#3c3d40" stroke-width="1"/>
  <path d="M1156.6 14 H1168.2 L1162.4 20.2Z" fill="#d8d8d8"/>
</svg>
<div class="t" style="left:2901.5px;top:71px;font-size:13px;color:#d8d8d8">Start</div>
<div class="t" style="left:3113.2px;top:70.8px;font-size:13px;color:#e0e0e0;transform:scaleX(0.967);transform-origin:0 0">1080p</div>
<div class="t" style="left:3434.2px;top:70.6px;font-size:13px;color:#e0e0e0;transform:scaleX(0.85);transform-origin:0 0">177%</div>
<!-- canvas -->
<div class="a" style="left:2322px;top:96.5px;width:1183px;height:1448px;background:#17181a"></div>
<div class="a" style="left:2324px;top:99px;width:1180px;height:1445px;background:#4c4f52;overflow:hidden">
  <div class="a" style="left:114px;top:215px;width:452px;height:452px;border-radius:50%;background:linear-gradient(90deg,#ee0000,#2ac400)"></div>
  <div class="a" style="left:566px;top:215px;width:452px;height:452px;border-radius:50%;background:#000"></div>
  <div class="a" style="left:566px;top:667px;width:452px;height:452px;border-radius:50%;background:radial-gradient(circle 465px at 0 0,#0d0000,#8cfd45 100%)"></div>
</div>
<svg style="left:2324px;top:99px" width="1180" height="1445">
  <g stroke="#7898d0" stroke-width="1.6" fill="none">
    <rect x="113.4" y="215.1" width="905.3" height="905"/>
    <path d="M566 0 V215 M566 1120 V1445 M0 667.5 H113.4 M1018.7 667.5 H1180"/>
  </g>
  <g fill="#fff" stroke="#4a70b8" stroke-width="1">
    <rect x="109.5" y="210.3" width="5" height="5"/>
    <rect x="563.5" y="210.5" width="5" height="5"/>
    <rect x="1018" y="210.5" width="5" height="5"/>
    <rect x="109.5" y="664.5" width="5" height="5"/>
    <rect x="1018" y="664.5" width="5" height="5"/>
    <rect x="109.5" y="1119.5" width="5" height="5"/>
    <rect x="563.5" y="1119.5" width="5" height="5"/>
    <rect x="1018" y="1119.5" width="5" height="5"/>
  </g>
  <rect x="551.1" y="1361" width="29.8" height="18.2" rx="4" fill="#fff"/>
</svg>
<div class="t" style="left:2880px;top:1463.5px;font-size:12px;color:#7aa0e0">284</div>
<!-- properties -->
<div class="a" style="left:3510px;top:33px;width:320px;height:1511px;background:#232629;border-radius:6px 0 0 0"></div>
<div class="a" style="left:3510px;top:33px;width:320px;height:29.6px;background:linear-gradient(180deg,#232427,#191a1c);border-radius:6px 0 0 0"></div>
<div class="a" style="left:3510px;top:62.6px;width:320px;height:2px;background:#37393c"></div>
<div class="a" style="left:3828.5px;top:33px;width:1.5px;height:1511px;background:#111214"></div>
<div class="a" style="left:3512px;top:127px;width:316.5px;height:27.8px;background:#3e3f41"></div>
<div class="a" style="left:3512px;top:193.5px;width:316.5px;height:27.4px;background:#3e3f41"></div>
<div class="a" style="left:3512px;top:546.8px;width:316.5px;height:16.0px;background:#2c2e30"></div>
<div class="a" style="left:3512px;top:567px;width:316.5px;height:27.7px;background:#3e3f41"></div>
<div class="a" style="left:3512px;top:728.9px;width:316.5px;height:16.9px;background:#2c2e30"></div>
<div class="a" style="left:3512px;top:749.7px;width:316.5px;height:27.0px;background:#3e3f41"></div>
<div class="a" style="left:3512px;top:815px;width:316.5px;height:28.3px;background:#3e3f41"></div>
<div class="a" style="left:3512px;top:847.2px;width:316.5px;height:28.1px;background:#3e3f41"></div>
<div class="a" style="left:3512px;top:879.2px;width:316.5px;height:27.8px;background:#3e3f41"></div>
<div class="a" style="left:3512px;top:910.8px;width:316.5px;height:27.8px;background:#3e3f41"></div>
<svg style="left:0;top:0" width="3830" height="1544"><g stroke="#e0e0e0" stroke-width="1.8"><path d="M3517.5 42.3 H3534.4 M3517.5 48 H3534.4 M3517.5 53.8 H3534.4"/></g><g stroke="#e0e0e0" stroke-width="2"><path d="M3521.3 39.5 V45 M3528.6 45.3 V50.7 M3522 51 V56.3"/></g><g stroke="#1d1e21" stroke-width="1.2"><path d="M3519.8 42.3 H3519.9 M3527 48 H3527.1 M3520.4 53.8 H3520.5"/></g><rect x="3518.8" y="74.9" width="14.3" height="12.4" rx="1" fill="none" stroke="#3a9ad8" stroke-width="1.6"/><rect x="3525.5" y="77.4" width="5" height="2.8" rx="1" fill="#3a9ad8"/><rect x="3521.3" y="81.6" width="5" height="2.8" rx="1" fill="#3a9ad8"/><rect x="3590.80" y="70.30" width="232.70" height="21.60" rx="7.5" fill="#0c0c0c" stroke="#3a3b3e" stroke-width="1"/><rect x="3517.10" y="98.20" width="306.40" height="21.70" rx="7.5" fill="#0c0c0c" stroke="#3a3b3e" stroke-width="1"/><circle cx="3527.2" cy="107.8" r="3.8" fill="none" stroke="#e0e0e0" stroke-width="1.7"/><path d="M3530 110.6 L3534 114.4" stroke="#e0e0e0" stroke-width="2" stroke-linecap="round"/><path d="M3522.8 137.3 L3528 142.8 L3533.2 137.3" fill="none" stroke="#e8e8e8" stroke-width="2"/><rect x="3649.80" y="163.90" width="18.60" height="18.30" rx="3.5" fill="#0c0c0c" stroke="#3a3b3e" stroke-width="1"/><path d="M3522.8 203.6 L3528 209.1 L3533.2 203.6" fill="none" stroke="#e8e8e8" stroke-width="2"/><rect x="3646.75" y="227.25" width="161.50" height="22.80" rx="7" fill="#0a0a0a" stroke="#4a78d0" stroke-width="1.5"/><rect x="3646.75" y="259.55" width="161.50" height="22.70" rx="7" fill="#0a0a0a" stroke="#4a78d0" stroke-width="1.5"/><rect x="3670.70" y="292.90" width="52.50" height="22.40" rx="7" fill="#0c0c0c" stroke="#3a3b3e" stroke-width="1"/><rect x="3670.70" y="321.10" width="52.50" height="21.80" rx="7" fill="#0c0c0c" stroke="#3a3b3e" stroke-width="1"/><rect x="3752.60" y="292.90" width="52.50" height="22.40" rx="7" fill="#0c0c0c" stroke="#3a3b3e" stroke-width="1"/><rect x="3752.60" y="321.10" width="52.50" height="21.80" rx="7" fill="#0c0c0c" stroke="#3a3b3e" stroke-width="1"/><rect x="3652.7" y="297.8" width="12.6" height="12.3" fill="#ffffff"/><rect x="3656.70" y="298.90" width="7.50" height="10.10" fill="#2a2c2f"/><rect x="3733.8" y="297.8" width="12.6" height="12.3" fill="#ffffff"/><rect x="3734.90" y="298.90" width="7.50" height="10.10" fill="#2a2c2f"/><rect x="3652.7" y="326.1" width="12.6" height="12.3" fill="#ffffff"/><rect x="3653.80" y="330.10" width="10.40" height="7.20" fill="#2a2c2f"/><rect x="3733.8" y="326.1" width="12.6" height="12.3" fill="#ffffff"/><rect x="3734.90" y="327.20" width="10.40" height="7.20" fill="#2a2c2f"/><rect x="3646.50" y="353.90" width="162.00" height="21.80" rx="7" fill="#0c0c0c" stroke="#3a3b3e" stroke-width="1"/><rect x="3646.50" y="386.00" width="162.00" height="21.80" rx="7" fill="#0c0c0c" stroke="#3a3b3e" stroke-width="1"/><rect x="3646.50" y="418.10" width="162.00" height="21.80" rx="7" fill="#0c0c0c" stroke="#3a3b3e" stroke-width="1"/><rect x="3646.50" y="450.20" width="162.00" height="21.80" rx="7" fill="#0c0c0c" stroke="#3a3b3e" stroke-width="1"/><g fill="#dcdcdc"><rect x="3653.2" y="486" width="1.6" height="16"/><rect x="3656" y="490.6" width="11.9" height="2.3"/><rect x="3656" y="495.6" width="6.9" height="2.5"/><rect x="3686" y="486" width="1.6" height="16"/><rect x="3680.3" y="490.6" width="13.7" height="2.3"/><rect x="3683" y="495.6" width="7.8" height="2.5"/><rect x="3719.4" y="486" width="1.6" height="16"/><rect x="3705.9" y="490.6" width="12.3" height="2.3"/><rect x="3711.8" y="495.6" width="6.4" height="2.5"/></g><rect x="3726.9" y="481.9" width="24.1" height="24" rx="1.8" fill="#d3d6da"/><g fill="#111"><rect x="3731.3" y="486" width="1.6" height="15.5"/><rect x="3745.3" y="486" width="1.6" height="15.5"/><rect x="3732.5" y="492.8" width="13" height="2.4"/></g><g fill="#dcdcdc"><rect x="3653.3" y="520.4" width="15.5" height="1.6"/><rect x="3656.5" y="522" width="3.2" height="12.9"/><rect x="3662.9" y="522" width="2.7" height="7.9"/><rect x="3679.3" y="527.1" width="15.6" height="1.6"/><rect x="3682" y="521.2" width="3.7" height="13.7"/><rect x="3688.5" y="523.5" width="3.2" height="9.1"/><rect x="3705.1" y="534.1" width="15.9" height="1.6"/><rect x="3708.2" y="521.2" width="3.4" height="11"/><rect x="3714.6" y="526.7" width="3.4" height="5.5"/></g><rect x="3726.9" y="516.2" width="24.1" height="23.8" rx="1.8" fill="#d3d6da"/><g fill="#111"><rect x="3731.5" y="520.4" width="15.1" height="1.6"/><rect x="3731.5" y="534.1" width="15.1" height="1.6"/><rect x="3737.4" y="522" width="3.2" height="12.1"/></g><path d="M3664.6 551.8 L3670.6 557.8 L3676.6 551.8" fill="none" stroke="#8c8c8c" stroke-width="1.7"/><path d="M3522.8 577.2 L3528 582.8 L3533.2 577.2" fill="none" stroke="#e8e8e8" stroke-width="2"/><rect x="3646.75" y="601.65" width="161.50" height="22.30" rx="7" fill="#0a0a0a" stroke="#4a78d0" stroke-width="1.5"/><path d="M3788.9 611.3 H3801.3 L3795.1 617.3Z" fill="#dcdcdc"/><path d="M3656.9 646 H3730" stroke="#3a9ad0" stroke-width="2.4"/><circle cx="3738.8" cy="646" r="8.1" fill="#c8cbd0"/><rect x="3753.00" y="635.20" width="52.30" height="21.70" rx="7" fill="#0c0c0c" stroke="#3a3b3e" stroke-width="1"/><rect x="3646.50" y="668.10" width="162.00" height="21.60" rx="7" fill="#0c0c0c" stroke="#3a3b3e" stroke-width="1"/><rect x="3654.3" y="671.5" width="15.4" height="15.2" fill="#ffffff"/><rect x="3654.30" y="675.30" width="3.85" height="3.80" fill="#8a8a8a"/><rect x="3654.30" y="682.90" width="3.85" height="3.80" fill="#8a8a8a"/><rect x="3658.15" y="671.50" width="3.85" height="3.80" fill="#8a8a8a"/><rect x="3658.15" y="679.10" width="3.85" height="3.80" fill="#8a8a8a"/><rect x="3662.00" y="675.30" width="3.85" height="3.80" fill="#8a8a8a"/><rect x="3662.00" y="682.90" width="3.85" height="3.80" fill="#8a8a8a"/><rect x="3665.85" y="671.50" width="3.85" height="3.80" fill="#8a8a8a"/><rect x="3665.85" y="679.10" width="3.85" height="3.80" fill="#8a8a8a"/><rect x="3646.50" y="700.20" width="162.00" height="21.80" rx="7" fill="#0c0c0c" stroke="#3a3b3e" stroke-width="1"/><path d="M3788.9 709.2 H3801.3 L3795.1 715.2Z" fill="#dcdcdc"/><path d="M3664.6 734.3 L3670.6 740.3 L3676.6 734.3" fill="none" stroke="#8c8c8c" stroke-width="1.7"/><path d="M3522.8 759.6 L3528 765.1 L3533.2 759.6" fill="none" stroke="#e8e8e8" stroke-width="2"/><rect x="3646.50" y="784.10" width="162.00" height="22.10" rx="7" fill="#0c0c0c" stroke="#3a3b3e" stroke-width="1"/><path d="M3525.5 823.9 L3530.8 829.1 L3525.5 834.4" fill="none" stroke="#e8e8e8" stroke-width="2"/><path d="M3525.5 856.0 L3530.8 861.2 L3525.5 866.5" fill="none" stroke="#e8e8e8" stroke-width="2"/><path d="M3525.5 887.9 L3530.8 893.1 L3525.5 898.3" fill="none" stroke="#e8e8e8" stroke-width="2"/><path d="M3525.5 919.5 L3530.8 924.7 L3525.5 929.9" fill="none" stroke="#e8e8e8" stroke-width="2"/></svg>
<div class="t" style="left:3544.5px;top:41.0px;font-size:15.2px;font-weight:700;color:#dcdcdc;transform:scaleX(0.945);transform-origin:0 0">Properties</div>
<div class="t" style="left:3542.6px;top:75.8px;font-size:12.6px;font-weight:400;color:#dcdcdc;transform:scaleX(0.96);transform-origin:0 0">Canvas</div>
<div class="t" style="left:3598.4px;top:75.8px;font-size:12.6px;font-weight:400;color:#9a9a9a;transform:scaleX(0.96);transform-origin:0 0">No name</div>
<div class="t" style="left:3542.6px;top:103.7px;font-size:12.6px;font-weight:400;color:#9a9a9a;transform:scaleX(0.99);transform-origin:0 0">Search properties</div>
<div class="t" style="left:3544.4px;top:134.0px;font-size:13.4px;font-weight:700;color:#dedede">Canvas</div>
<div class="t" style="left:3520.1px;top:166.7px;font-size:13.3px;font-weight:400;color:#c4c4c4;transform:scaleX(0.96);transform-origin:0 0">Items Host</div>
<div class="t" style="left:3544.4px;top:200.3px;font-size:13.4px;font-weight:700;color:#dedede">Layout</div>
<div class="t" style="left:3520.1px;top:232.0px;font-size:13.3px;font-weight:400;color:#5a8fe0;transform:scaleX(0.96);transform-origin:0 0">Width</div>
<div class="t" style="left:3654.4px;top:232.0px;font-size:13.3px;font-weight:400;color:#e6e6e6">512</div>
<div class="t" style="left:3520.1px;top:264.3px;font-size:13.3px;font-weight:400;color:#5a8fe0;transform:scaleX(0.96);transform-origin:0 0">Height</div>
<div class="t" style="left:3654.4px;top:264.3px;font-size:13.3px;font-weight:400;color:#e6e6e6">512</div>
<div class="t" style="left:3520.1px;top:296.9px;font-size:13.3px;font-weight:400;color:#c4c4c4;transform:scaleX(0.96);transform-origin:0 0">Margin</div>
<div class="t" style="left:3678.3px;top:297.5px;font-size:13.3px;font-weight:400;color:#e6e6e6">0</div>
<div class="t" style="left:3678.3px;top:325.4px;font-size:13.3px;font-weight:400;color:#e6e6e6">0</div>
<div class="t" style="left:3760.2px;top:297.5px;font-size:13.3px;font-weight:400;color:#e6e6e6">0</div>
<div class="t" style="left:3760.2px;top:325.4px;font-size:13.3px;font-weight:400;color:#e6e6e6">0</div>
<div class="t" style="left:3520.1px;top:358.2px;font-size:13.3px;font-weight:400;color:#c4c4c4;transform:scaleX(0.96);transform-origin:0 0">Row</div>
<div class="t" style="left:3654.4px;top:358.2px;font-size:13.3px;font-weight:400;color:#e6e6e6">0</div>
<div class="t" style="left:3520.1px;top:390.3px;font-size:13.3px;font-weight:400;color:#c4c4c4;transform:scaleX(0.96);transform-origin:0 0">Row Span</div>
<div class="t" style="left:3654.4px;top:390.3px;font-size:13.3px;font-weight:400;color:#e6e6e6">1</div>
<div class="t" style="left:3520.1px;top:422.4px;font-size:13.3px;font-weight:400;color:#c4c4c4;transform:scaleX(0.96);transform-origin:0 0">Column</div>
<div class="t" style="left:3654.4px;top:422.4px;font-size:13.3px;font-weight:400;color:#e6e6e6">0</div>
<div class="t" style="left:3520.1px;top:454.5px;font-size:13.3px;font-weight:400;color:#c4c4c4;transform:scaleX(0.96);transform-origin:0 0">Column Span</div>
<div class="t" style="left:3654.4px;top:454.5px;font-size:13.3px;font-weight:400;color:#e6e6e6">1</div>
<div class="t" style="left:3520.1px;top:487.3px;font-size:13.3px;font-weight:400;color:#c4c4c4;transform:scaleX(0.955);transform-origin:0 0">Horizontal Alignment</div>
<div class="t" style="left:3520.1px;top:521.0px;font-size:13.3px;font-weight:400;color:#c4c4c4;transform:scaleX(0.955);transform-origin:0 0">Vertical Alignment</div>
<div class="t" style="left:3544.4px;top:574.0px;font-size:13.4px;font-weight:700;color:#dedede">Appearance</div>
<div class="t" style="left:3520.1px;top:606.2px;font-size:13.3px;font-weight:400;color:#5a8fe0;transform:scaleX(0.96);transform-origin:0 0">Visibility</div>
<div class="t" style="left:3654.4px;top:606.2px;font-size:13.3px;font-weight:400;color:#e6e6e6">Visible</div>
<div class="t" style="left:3520.1px;top:639.4px;font-size:13.3px;font-weight:400;color:#c4c4c4;transform:scaleX(0.96);transform-origin:0 0">Opacity</div>
<div class="t" style="left:3759.9px;top:639.4px;font-size:13.3px;font-weight:400;color:#e6e6e6;transform:scaleX(0.87);transform-origin:0 0">100%</div>
<div class="t" style="left:3520.1px;top:672.3px;font-size:13.3px;font-weight:400;color:#c4c4c4;transform:scaleX(0.96);transform-origin:0 0">Background</div>
<div class="t" style="left:3676.4px;top:672.4px;font-size:13.3px;font-weight:400;color:#e6e6e6;transform:scaleX(0.96);transform-origin:0 0">No brush</div>
<div class="t" style="left:3520.1px;top:704.5px;font-size:13.3px;font-weight:400;color:#c4c4c4;transform:scaleX(0.96);transform-origin:0 0">Effect</div>
<div class="t" style="left:3654.4px;top:704.5px;font-size:13.3px;font-weight:400;color:#e6e6e6">None</div>
<div class="t" style="left:3544.4px;top:756.3px;font-size:13.4px;font-weight:700;color:#dedede">Data</div>
<div class="t" style="left:3520.1px;top:788.5px;font-size:13.3px;font-weight:400;color:#c4c4c4;transform:scaleX(0.96);transform-origin:0 0">Data Context</div>
<div class="t" style="left:3544.4px;top:822.3px;font-size:13.4px;font-weight:700;color:#dedede">Common</div>
<div class="t" style="left:3544.4px;top:854.4px;font-size:13.4px;font-weight:700;color:#dedede">Transform</div>
<div class="t" style="left:3544.4px;top:886.2px;font-size:13.4px;font-weight:700;color:#dedede">Styling</div>
<div class="t" style="left:3544.4px;top:917.8px;font-size:13.4px;font-weight:700;color:#dedede">Interactivity</div>
</body></html>
